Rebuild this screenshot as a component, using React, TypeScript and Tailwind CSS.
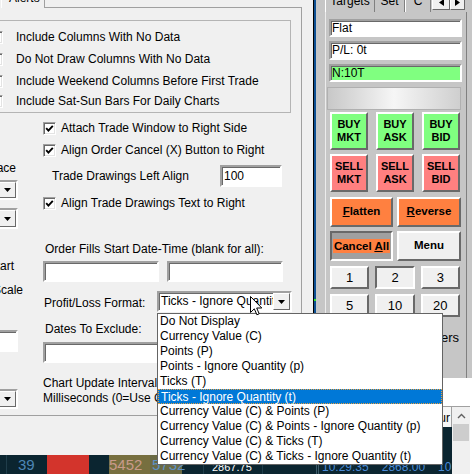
import React from 'react'

const sunken =
  'bg-white border-2 border-t-[#a0a0a0] border-l-[#a0a0a0] border-r-white border-b-white shadow-[inset_1px_1px_0_#696969]'
const raised =
  'border-2 border-t-white border-l-white border-r-[#696969] border-b-[#696969]'
const pressed =
  'border-2 border-t-[#696969] border-l-[#696969] border-r-white border-b-white'

const plFormats = [
  'Do Not Display',
  'Currency Value (C)',
  'Points (P)',
  'Points - Ignore Quantity (p)',
  'Ticks (T)',
  'Ticks - Ignore Quantity (t)',
  'Currency Value (C) & Points (P)',
  'Currency Value (C) & Points - Ignore Quantity (p)',
  'Currency Value (C) & Ticks (T)',
  'Currency Value (C) & Ticks - Ignore Quantity (t)',
]

function Checkbox({ checked = false }: { checked?: boolean }) {
  return (
    <span className="flex h-[13px] w-[13px] shrink-0 items-center justify-center border border-[#a0a0a0] border-r-white border-b-white bg-white shadow-[inset_1px_1px_0_#696969,inset_-1px_-1px_0_#e3e3e3]">
      {checked && (
        <svg width="9" height="9" viewBox="0 0 9 9">
          <path d="M1.2 4.2 L3.4 6.6 L7.8 1.8" fill="none" stroke="#000" strokeWidth="1.9" />
        </svg>
      )}
    </span>
  )
}

function DropButton() {
  return (
    <span className="flex w-[17px] shrink-0 items-center justify-center self-stretch bg-[#f0f0f0] border border-t-white border-l-white border-r-[#696969] border-b-[#696969]">
      <svg width="7" height="4" viewBox="0 0 7 4">
        <path d="M0 0h7L3.5 4z" fill="#000" />
      </svg>
    </span>
  )
}

function Combo({ text = '', className = '' }: { text?: string; className?: string }) {
  return (
    <div className={`flex ${sunken} ${className}`}>
      <span className="flex-1 overflow-hidden whitespace-nowrap pl-[2px] leading-[17px]">{text}</span>
      <DropButton />
    </div>
  )
}

function Dialog() {
  return (
    <div className="flex w-[313px] flex-col bg-[#f0f0f0]">
      {/* Tab strip (only the bottom of the Alerts tab shows) */}
      <div className="flex h-[8px]">
        <div className="ml-[1px] h-[8px] w-[44px] overflow-hidden border-x border-l-white border-r-[#a0a0a0]">
          <div className="-mt-[9px] pl-[7px] leading-[14px]">Alerts</div>
        </div>
        <div className="mt-[7px] h-[1px] w-[257px] bg-[#a0a0a0]" />
      </div>

      {/* Tab page */}
      <div className="flex h-[408px] w-[302px] flex-col border-r border-b border-[#a0a0a0]">
        {/* Group box */}
        <div className="-ml-[20px] mt-[12px] flex h-[93px] w-[311px] flex-col border border-[#b4b4b4] pt-[5px] pl-[9px]">
          {[
            'Include Columns With No Data',
            'Do Not Draw Columns With No Data',
            'Include Weekend Columns Before First Trade',
            'Include Sat-Sun Bars For Daily Charts',
          ].map((label, i) => (
            <div key={label} className={`flex items-center gap-[13px] ${i === 3 ? 'h-[18px]' : 'h-[22px]'}`}>
              <Checkbox />
              <span className="whitespace-nowrap">{label}</span>
            </div>
          ))}
        </div>

        <div className="flex">
          {/* Far-left column, mostly cut off */}
          <div className="flex w-[43px] shrink-0 flex-col items-end overflow-hidden">
            <div className="mt-[47px] mr-[27px] h-[16px] whitespace-nowrap leading-[16px]">Chart Space</div>
            <Combo className="mt-[4px] mr-[25px] h-[20px] w-[60px]" />
            <Combo text="Use Chart Time Zone" className="mt-[8px] mr-[25px] h-[21px] w-[60px]" />
            <div className="mt-[29px] mr-[29px] h-[16px] whitespace-nowrap leading-[16px]">Bar Start</div>
            <div className="mt-[8px] mr-[20px] h-[16px] whitespace-nowrap leading-[16px]">Price Scale</div>
            <div className={`mt-[32px] mr-[25px] h-[22px] w-[60px] shrink-0 ${sunken}`} />
            <Combo className="mt-[37px] mr-[25px] h-[20px] w-[60px]" />
          </div>

          {/* Main column */}
          <div className="flex flex-1 flex-col">
            <div className="mt-[5px] flex h-[20px] items-center gap-[5px]">
              <Checkbox checked />
              <span>Attach Trade Window to Right Side</span>
            </div>
            <div className="mt-[2px] flex h-[20px] items-center gap-[5px]">
              <Checkbox checked />
              <span>Align Order Cancel (X) Button to Right</span>
            </div>
            <div className="mt-[5px] flex h-[22px] items-center">
              <span className="w-[177px] pl-[9px]">Trade Drawings Left Align</span>
              <div className={`h-[22px] w-[62px] pl-[2px] leading-[18px] ${sunken}`}>100</div>
            </div>
            <div className="mt-[6px] flex h-[20px] items-center gap-[5px]">
              <Checkbox checked />
              <span>Align Trade Drawings Text to Right</span>
            </div>
            <div className="mt-[28px] h-[16px] pl-[2px] leading-[16px]">Order Fills Start Date-Time (blank for all):</div>
            <div className="mt-[4px] flex gap-[8px]">
              <div className={`h-[21px] w-[116px] ${sunken}`} />
              <div className={`h-[21px] w-[116px] ${sunken}`} />
            </div>
            <div className="mt-[9px] flex h-[21px] items-center">
              <span className="w-[114px] pl-[1px] pt-[3px]">Profit/Loss Format:</span>
              <Combo text="Ticks - Ignore Quantity (t)" className="h-[21px] w-[135px]" />
            </div>
            <div className="mt-[9px] h-[16px] pl-[2px] leading-[16px]">Dates To Exclude:</div>
            <div className={`mt-[5px] h-[21px] w-[240px] ${sunken}`} />
            <div className="mt-[13px] whitespace-nowrap leading-[15px]">
              <div>Chart Update Interval in</div>
              <div>Milliseconds (0=Use Global)</div>
            </div>
          </div>
        </div>
      </div>
    </div>
  )
}

function ChartStrip() {
  return (
    <div className="flex h-[19px] w-[316px] items-start overflow-hidden bg-[#0b2530]">
      <div className="h-full w-[6px]" />
      <div className="h-full w-[1px] bg-[#1f3d4a]" />
      <div className="h-full w-[40px] pl-[11px] pt-[1px] text-[15px] leading-[18px] text-[#4d86b6]">39</div>
      <div className="h-full w-[42px] bg-[#d3342c]" />
      <div className="h-full w-[20px]" />
      <div className="h-full w-[41px] bg-[#776f3f] pt-[1px] text-[15px] leading-[18px] text-[#c99a8a]">5452</div>
      <div className="h-full w-[32px] bg-[#6a6a44] pl-[2px] pt-[1px] text-[15px] leading-[18px] text-[#5d91c4]">5732</div>
      <div className="h-full w-[21px]" />
      <div className="h-full w-[1px] bg-[#1f3d4a]" />
      <div className="h-full w-[58px] pl-[8px] pt-[6px] text-[11px] leading-[13px] text-white">2867.75</div>
      <div className="h-full w-[1px] bg-[#1f3d4a]" />
      <div className="h-full flex-1" />
    </div>
  )
}

function BigButton({ top, bottom, color }: { top: string; bottom: string; color: string }) {
  return (
    <div className={`flex h-[38px] flex-col items-center justify-center text-[11px] font-bold leading-[13px] ${raised} ${color}`}>
      <span>{top}</span>
      <span>{bottom}</span>
    </div>
  )
}

function RightPanel() {
  return (
    <div className="flex w-[156px] flex-col">
      <div className="flex h-[378px] flex-col bg-[#c6c6c6]">
        {/* Tabs */}
        <div className="flex h-[12px] pl-[9px]">
          <div className="h-[12px] w-[50px] overflow-hidden border-l border-r border-l-white border-r-[#808080]">
            <div className="-mt-[6px] text-center leading-[14px]">Targets</div>
          </div>
          <div className="h-[12px] w-[30px] overflow-hidden border-r border-r-[#808080]">
            <div className="-mt-[6px] text-center leading-[14px]">Set</div>
          </div>
          <div className="h-[12px] w-[26px] overflow-hidden border-r border-l border-l-white border-r-[#808080]">
            <div className="-mt-[6px] text-center leading-[14px]">C</div>
          </div>
          <div className="ml-[1px] flex h-[10px] w-[18px] items-center justify-center bg-[#f0f0f0] border border-t-0 border-r-[#696969] border-b-[#696969] border-l-white">
            <svg width="5" height="7" viewBox="0 0 5 7" className="-mt-[5px]">
              <path d="M5 0v7L0 3.5z" fill="#000" />
            </svg>
          </div>
          <div className="flex h-[10px] w-[15px] items-center justify-center bg-[#f0f0f0] border border-t-0 border-r-[#696969] border-b-[#696969] border-l-white">
            <svg width="5" height="7" viewBox="0 0 5 7" className="-mt-[5px]">
              <path d="M0 0v7L5 3.5z" fill="#000" />
            </svg>
          </div>
        </div>

        {/* Tab page */}
        <div className="ml-[9px] flex h-[366px] w-[142px] flex-col border-l border-r border-l-[#ececec] border-r-[#808080]">
          <div className={`mt-[7px] ml-[3px] h-[18px] w-[133px] ${sunken} pl-[1px] leading-[14px]`}>Flat</div>
          <div className={`mt-[4px] ml-[3px] h-[19px] w-[133px] ${sunken} pl-[1px] leading-[15px]`}>P/L: 0t</div>
          <div className={`mt-[4px] ml-[3px] h-[18px] w-[133px] ${sunken} !bg-[#80ff80] pl-[1px] leading-[14px]`}>N:10T</div>
          <div className="mt-[5px] ml-[1px] h-[23px] w-[134px] border border-[#b0b0b0] bg-gradient-to-r from-[#c8c8c8] via-[#f6f6f6] to-[#cfcfcf]" />

          <div className="mt-[2px] ml-[4px] grid w-[130px] grid-cols-3 gap-[8px]">
            <BigButton top="BUY" bottom="MKT" color="bg-[#80ff80]" />
            <BigButton top="BUY" bottom="ASK" color="bg-[#80ff80]" />
            <BigButton top="BUY" bottom="BID" color="bg-[#80ff80]" />
          </div>
          <div className="mt-[4px] ml-[4px] grid w-[130px] grid-cols-3 gap-[8px]">
            <BigButton top="SELL" bottom="MKT" color="bg-[#ff8080]" />
            <BigButton top="SELL" bottom="ASK" color="bg-[#ff8080]" />
            <BigButton top="SELL" bottom="BID" color="bg-[#ff8080]" />
          </div>

          <div className="mt-[5px] ml-[4px] flex w-[131px] gap-[4px] whitespace-nowrap text-[11.5px] font-bold">
            <div className={`flex h-[30px] w-[63px] items-center justify-center bg-[#ff8040] ${raised}`}>
              <span><u>F</u>latten</span>
            </div>
            <div className={`flex h-[30px] w-[64px] items-center justify-center bg-[#ff8040] ${raised}`}>
              <span><u>R</u>everse</span>
            </div>
          </div>
          <div className="mt-[4px] ml-[4px] flex w-[131px] gap-[4px] whitespace-nowrap text-[11.5px] font-bold">
            <div className={`flex h-[30px] w-[63px] items-center justify-center bg-[#a0a0a0] ${pressed}`}>
              <span className="bg-[#ff8040] px-[1px] leading-[14px]">Cancel <u>A</u>ll</span>
            </div>
            <div className={`flex h-[30px] w-[64px] items-center justify-center bg-[#f0f0f0] ${raised}`}>
              <span>Menu</span>
            </div>
          </div>

          {[['1', '2', '3'], ['5', '10', '20']].map((row, r) => (
            <div key={r} className="mt-[5px] ml-[4px] grid w-[130px] grid-cols-3 gap-[6px]">
              {row.map((n) => (
                <div
                  key={n}
                  className={`flex h-[23px] items-center justify-center bg-[#f0f0f0] text-[13px] ${n === '2' ? pressed : raised}`}
                >
                  {n}
                </div>
              ))}
            </div>
          ))}

          <div className="mt-[13px] mr-[7px] self-end text-[13px] leading-[16px]">Orders</div>
        </div>
      </div>

      <div className="h-[28px] bg-white" />

      {/* Orders grid */}
      <div className="flex h-[68px]">
        <div className="flex w-[136px] flex-col">
          <div className="flex h-[24px] justify-end border-t border-[#a0a0a0] bg-[#f7f7f7]">
            <span className="border-r border-[#a0a0a0] pr-[1px] pt-[4px] leading-[14px]">Hour</span>
          </div>
          <div className="flex flex-1 bg-[#0b2530]">
            <div className="w-[1px] bg-[#3c5a68]" />
            <div className="ml-[1px] w-[1px] bg-[#3c5a68]" />
            <div className="flex gap-[13px] pl-[3px] pt-[33px] text-[12px] leading-[14px] text-[#4a8ad6]">
              <span>10:29:35</span>
              <span>2868.00</span>
              <span>10</span>
            </div>
          </div>
        </div>
        <div className="flex w-[18px] flex-col border-t border-[#a0a0a0] bg-[#f0f0f0]">
          <div className="flex h-[17px] items-center justify-center">
            <svg width="9" height="6" viewBox="0 0 9 6">
              <path d="M1 5 L4.5 1.5 L8 5" fill="none" stroke="#606060" strokeWidth="1.4" />
            </svg>
          </div>
          <div className="mx-[1px] h-[17px] bg-[#cdcdcd]" />
        </div>
        <div className="flex-1 bg-white" />
      </div>
    </div>
  )
}

export default function App() {
  return (
    <div className="relative flex h-[474px] w-[472px] overflow-hidden bg-[#f0f0f0] font-['Liberation_Sans',Arial,sans-serif] text-[12px] text-black">
      <div className="flex w-[316px] shrink-0 flex-col">
        <div className="flex h-[455px]">
          <Dialog />
          <div className="flex w-[3px] flex-col border-l border-black bg-[#0d4f92]">
            <div className="h-[299px]" />
            <div className="h-[2px] bg-[#2ee82e]" />
          </div>
        </div>
        <ChartStrip />
      </div>

      <RightPanel />

      {/* Open dropdown list of the Profit/Loss Format combo */}
      <div className="absolute left-[157px] top-[313px] w-[286px] border border-[#646464] bg-white">
        {plFormats.map((item, i) => (
          <div
            key={item}
            className={`h-[15px] whitespace-nowrap pl-[2px] leading-[14px] ${
              i === 5 ? 'border border-dotted border-[#e8a040] bg-[#0078d7] pl-[1px] text-white' : ''
            }`}
          >
            {item}
          </div>
        ))}
      </div>

      {/* Mouse pointer */}
      <svg className="absolute left-[250px] top-[296px]" width="13" height="20" viewBox="0 0 13 20">
        <path
          d="M0.5 0.5 L0.5 16.5 L4.3 12.8 L6.9 18.8 L9.2 17.8 L6.7 12 L11.8 12 Z"
          fill="#fff"
          stroke="#000"
          strokeWidth="1"
        />
      </svg>
    </div>
  )
}
